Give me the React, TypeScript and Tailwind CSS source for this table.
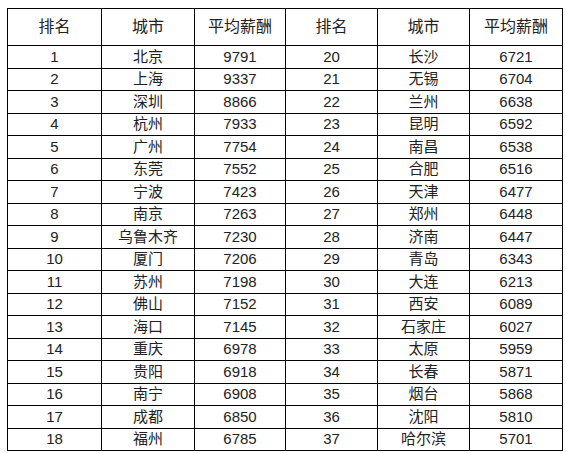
// Salary ranking table - two halves side by side
const LEFT: [number, string, number][] = [
  [1, '北京', 9791],
  [2, '上海', 9337],
  [3, '深圳', 8866],
  [4, '杭州', 7933],
  [5, '广州', 7754],
  [6, '东莞', 7552],
  [7, '宁波', 7423],
  [8, '南京', 7263],
  [9, '乌鲁木齐', 7230],
  [10, '厦门', 7206],
  [11, '苏州', 7198],
  [12, '佛山', 7152],
  [13, '海口', 7145],
  [14, '重庆', 6978],
  [15, '贵阳', 6918],
  [16, '南宁', 6908],
  [17, '成都', 6850],
  [18, '福州', 6785],
];

const RIGHT: [number, string, number][] = [
  [20, '长沙', 6721],
  [21, '无锡', 6704],
  [22, '兰州', 6638],
  [23, '昆明', 6592],
  [24, '南昌', 6538],
  [25, '合肥', 6516],
  [26, '天津', 6477],
  [27, '郑州', 6448],
  [28, '济南', 6447],
  [29, '青岛', 6343],
  [30, '大连', 6213],
  [31, '西安', 6089],
  [32, '石家庄', 6027],
  [33, '太原', 5959],
  [34, '长春', 5871],
  [35, '烟台', 5868],
  [36, '沈阳', 5810],
  [37, '哈尔滨', 5701],
];

const HEADERS = ['排名', '城市', '平均薪酬', '排名', '城市', '平均薪酬'];
const WIDTHS = ['w-[94px]', 'w-[93px]', 'w-[91px]', 'w-[92px]', 'w-[92px]', 'w-[93px]'];

export default function App() {
  return (
    <div className="w-[566px] h-[453px] bg-white pt-[8px] pl-[7px] overflow-hidden font-['Liberation_Sans','Noto_Sans_CJK_SC',sans-serif] text-[#222]">
      <table className="table-fixed border-collapse w-[556px]">
        <thead>
          <tr className="h-[37px]">
            {HEADERS.map((h, i) => (
              <th
                key={i}
                className={`${WIDTHS[i]} border border-black p-0 text-center align-middle text-[16px] font-normal`}
              >
                {h}
              </th>
            ))}
          </tr>
        </thead>
        <tbody>
          {LEFT.map((row, idx) => {
            const cells = [...row, ...RIGHT[idx]];
            return (
              <tr key={idx} className="h-[22.5px]">
                {cells.map((c, i) => (
                  <td
                    key={i}
                    className="border border-black p-0 text-center align-middle text-[15px] leading-[20px]"
                  >
                    {c}
                  </td>
                ))}
              </tr>
            );
          })}
        </tbody>
      </table>
    </div>
  );
}
